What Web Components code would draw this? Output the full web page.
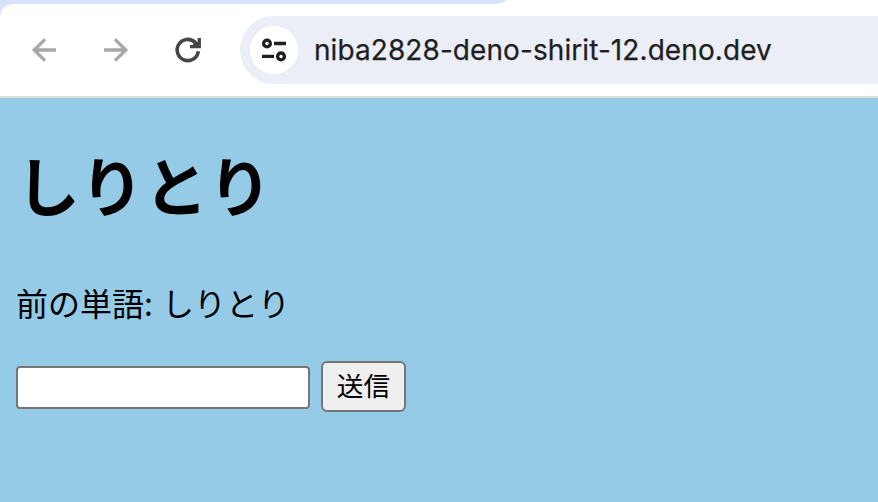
<!DOCTYPE html>
<html lang="ja">
<head>
<meta charset="utf-8">
<title>しりとり</title>
<style>
html, body { margin: 0; height: 100%; overflow: hidden; }
</style>
</head>
<body>
<browser-window>
  <browser-toolbar slot="toolbar">
    <nav-icon name="back"></nav-icon>
    <nav-icon name="forward"></nav-icon>
    <nav-icon name="reload"></nav-icon>
    <address-bar slot="address">niba2828-deno-shirit-12.deno.dev</address-bar>
  </browser-toolbar>
  <shiritori-page>
    <span slot="title">しりとり</span>
    <span slot="word">前の単語: しりとり</span>
    <word-form>送信</word-form>
  </shiritori-page>
</browser-window>
<script>
function define(name, html, setup) {
  customElements.define(name, class extends HTMLElement {
    constructor() {
      super();
      const root = this.attachShadow({ mode: "open" });
      root.innerHTML = html;
      if (setup) setup(this, root);
    }
  });
}

define("browser-window", `
<style>
:host { display: flex; flex-direction: column; width: 100%; height: 100vh; background: #fff; }
.tabs { height: 4px; flex: none; }
.tabs svg { display: block; width: 514px; height: 20px; }
</style>
<div class="tabs"><svg viewBox="0 0 514 20"><path d="M0 0H507Q501 4 492 4H15Q0 4 0 19Z" fill="#d7e2fb"/></svg></div>
<slot name="toolbar"></slot>
<slot></slot>`);

define("browser-toolbar", `
<style>
:host { display: flex; align-items: center; height: 94px; box-sizing: border-box; border-bottom: 2px solid #dfdfdf; padding-left: 28px; flex: none; }
.nav { display: flex; gap: 40px; width: 212px; flex: none; }
::slotted(address-bar) { flex: 1; }
</style>
<div class="nav"><slot></slot></div><slot name="address"></slot>`);

const icons = {
  back: '<path d="M28 16H6M17 5.3L6.2 16L17 26.7" stroke="#a8a8a8" stroke-width="3.3"/>',
  forward: '<path d="M4 16H26M15 5.3L25.8 16L15 26.7" stroke="#a8a8a8" stroke-width="3.3"/>',
  reload: '<path d="M26.3 17.2A10.6 10.6 0 1 1 23.2 8.4L25 10.5" stroke="#464646" stroke-width="3.6"/><path d="M25.6 4H28.9V14.3H18V11H20.5L23 7.5L25.6 8.5Z" fill="#464646"/>'
};
define("nav-icon", `
<style>:host { display: block; width: 32px; height: 32px; } svg { display: block; }</style>
<svg width="32" height="32" viewBox="0 0 32 32" fill="none"></svg>`,
(host, root) => { root.querySelector("svg").innerHTML = icons[host.getAttribute("name")]; });

define("address-bar", `
<style>
:host { display: flex; align-items: center; gap: 16px; height: 68px; box-sizing: border-box; padding-left: 10px; background: #ebeef7; border-radius: 34px 0 0 34px; font: 28px/40px Inter, sans-serif; letter-spacing: .08px; color: #1f1f1f; -webkit-text-stroke: .25px #1f1f1f; white-space: nowrap; }
.site { width: 48px; height: 48px; border-radius: 50%; background: #fff; flex: none; }
svg { display: block; }
</style>
<div class="site"><svg width="48" height="48" viewBox="0 0 48 48" fill="none" stroke="#1f1f1f" stroke-width="3.3"><circle cx="17" cy="17.5" r="3.4"/><path d="M24 17.5H36M12 30.4H24"/><circle cx="31" cy="30.4" r="3.4"/></svg></div>
<span><slot></slot></span>`);

define("shiritori-page", `
<style>
:host { display: block; flex: 1; background: #96cbe8; padding: 0 16px; color: #000; font-family: "Noto Sans CJK JP", sans-serif; }
h1 { margin: 0; padding-top: 39px; font-size: 64px; line-height: 92px; font-weight: 700; }
p { margin: 0; padding-top: 49px; font-size: 32px; line-height: 48px; word-spacing: 2px; }
::slotted(word-form) { margin-top: 35px; }
</style>
<h1><slot name="title"></slot></h1>
<p><slot name="word"></slot></p>
<slot></slot>`);

define("word-form", `
<style>
:host { display: flex; align-items: center; gap: 11px; height: 51px; }
input { box-sizing: border-box; width: 294px; height: 43px; margin: 1px 0 0; border: 2px solid #767676; border-radius: 4px; background: #fff; padding: 2px 4px; font: inherit; font-size: 26px; }
button { box-sizing: border-box; width: 85px; height: 51px; margin: 0; border: 2px solid #767676; border-radius: 6px; background: #efefef; padding: 0 0 3px; font: 26.67px/40px "Noto Sans CJK JP", sans-serif; color: #000; }
</style>
<input type="text"><button type="button"><slot></slot></button>`);
</script>
</body>
</html>
